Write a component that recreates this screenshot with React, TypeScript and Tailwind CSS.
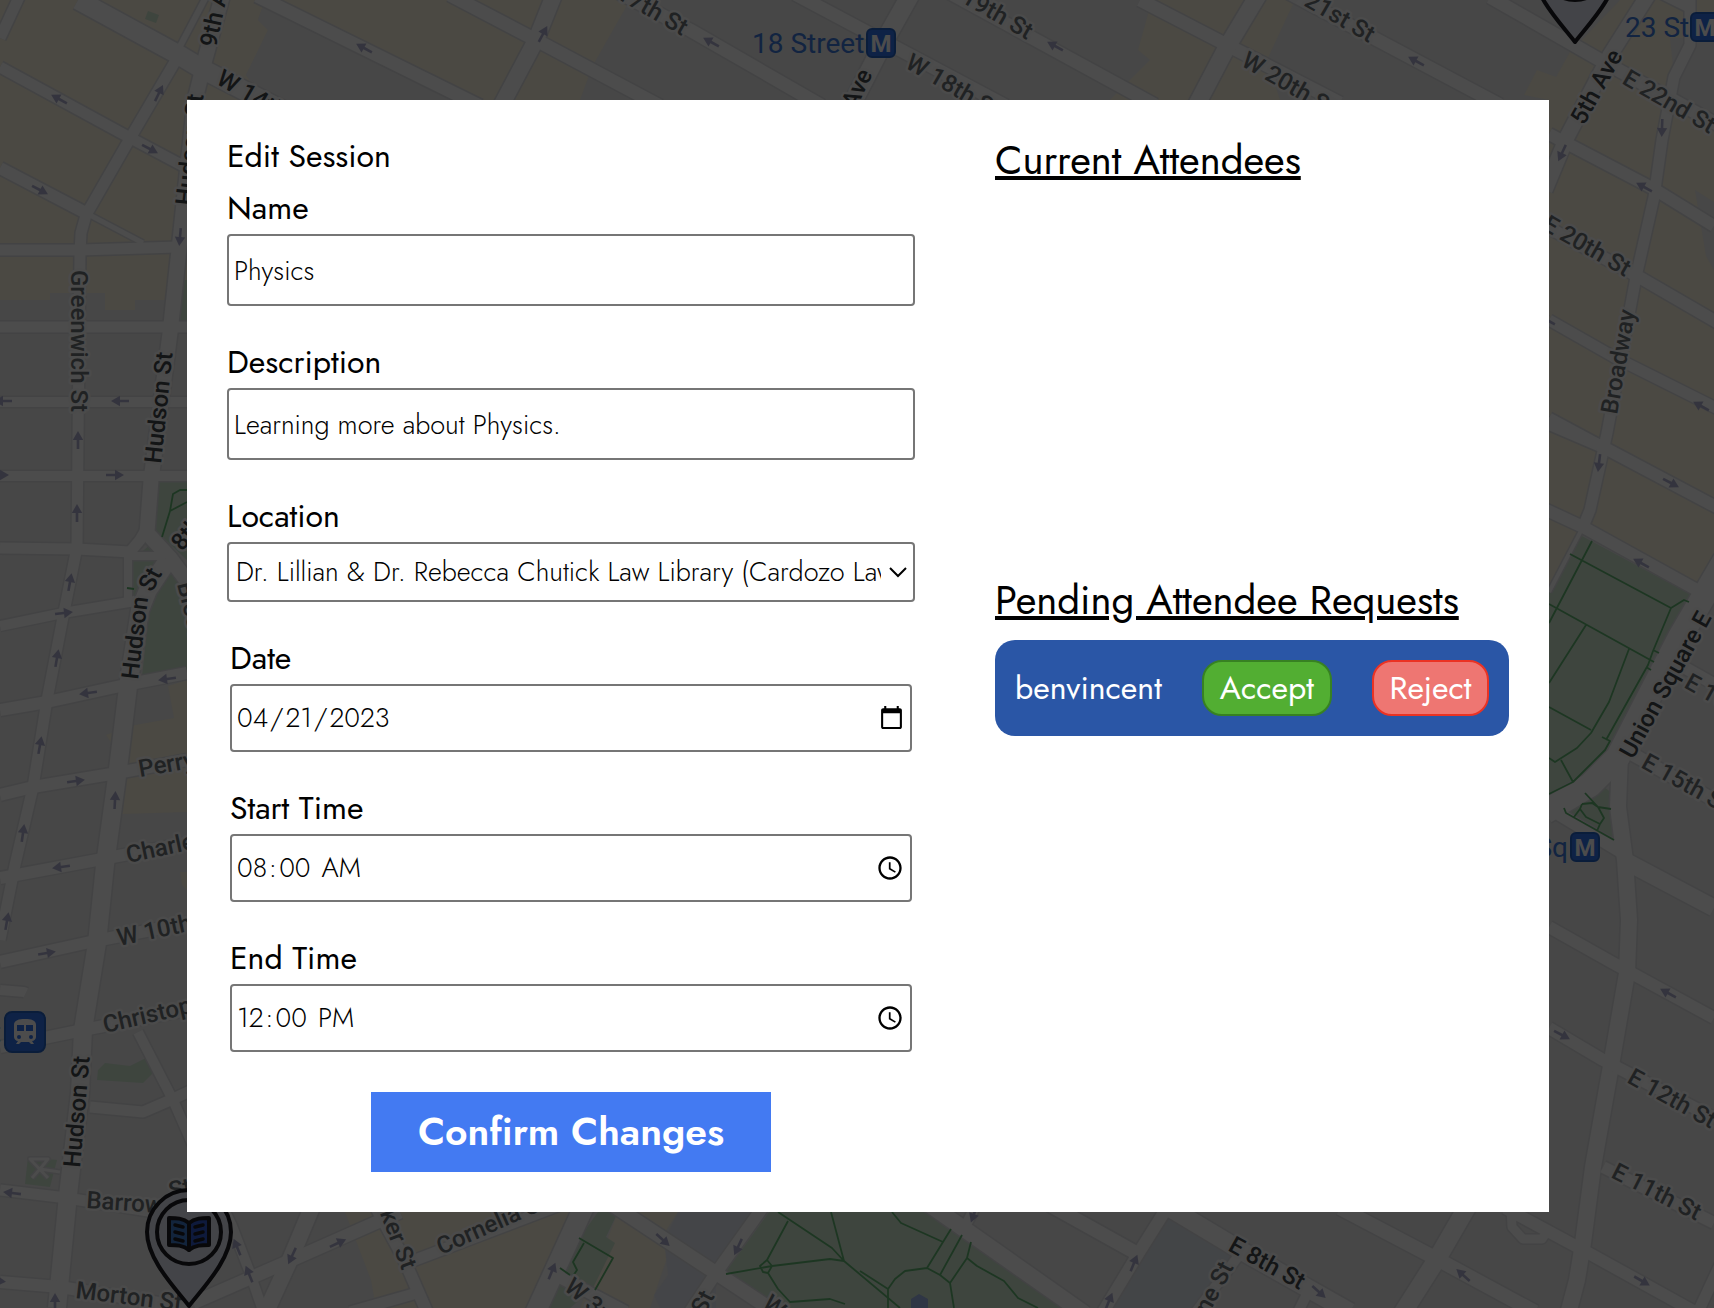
import type { ReactNode } from "react";

/* ------------------------------------------------------------------ map */

const blocks: { color: string; points: string }[] = [
  { color: "#faf3df", points: "0,0 265,0 258,20 268,30 246,75 262,100 187,100 187,300 135,300 135,310 105,310 105,293 50,293 50,300 0,300" },
  { color: "#faf3df", points: "264,0 630,0 592,67 580,100 470,100" },
  { color: "#ededed", points: "265,0 258,20 268,30 246,75 275,100 425,100 468,100 480,106 264,0" },
  { color: "#faf3df", points: "1152,0 1295,0 1267,60 1280,100 1110,100 1150,60 1138,50" },
  { color: "#faf3df", points: "1620,0 1714,0 1714,580 1697,590 1580,532 1549,590 1549,100 1524,95 1537,70 1556,77 1570,52" },
  { color: "#ededed", points: "1670,38 1714,38 1714,120 1676,95" },
  { color: "#ededed", points: "1695,190 1714,202 1714,270 1706,256" },
  { color: "#faf3df", points: "168,686 187,680 187,812 122,814 128,768 106,735 130,726 174,718" },
  { color: "#faf3df", points: "180,872 187,872 187,890 182,885" },
  { color: "#faf3df", points: "345,1212 575,1212 540,1308 376,1308 371,1280" },
  { color: "#faf3df", points: "618,1212 678,1212 660,1240 668,1255 650,1308 580,1308" },
  { color: "#e4e8f0", points: "678,1212 762,1212 716,1272 716,1308 660,1308 654,1295 668,1275 664,1240" },
  { color: "#e2e6ee", points: "1169,1214 1236,1255 1196,1308 1112,1308" },
];

const parks: string[] = [
  "148,11 159,15 156,23 145,19",
  "454,0 470,0 465,9",
  "182,280 187,280 187,322 180,320",
  "159,481 187,481 187,560 155,530",
  "132,560 150,545 176,575 187,585 187,670 142,677 148,620 130,600",
  "98,1070 105,1063 130,1066 146,1058 153,1073 143,1083 97,1080",
  "28,1157 57,1160 50,1187 25,1184",
  "598,1212 618,1212 606,1237 615,1243 592,1290 570,1308 542,1308 553,1275",
  "769,1212 931,1212 1072,1308 765,1308 724,1274",
  "1580,535 1692,595 1607,750 1573,782 1549,795 1549,592",
  "1597,782 1612,793 1614,840 1563,812",
];

const footpaths: string[] = [
  "187,490 180,490 173,494 170,511 187,502 M170,511 162,537",
  "127,588 134,589",
  "579,1238 613,1258 595,1290 M584,1243 573,1262 577,1270 573,1276 M560,1268 570,1275",
  "778,1212 832,1248 844,1261 900,1308 M831,1212 844,1261 830,1259 772,1266 726,1274 M788,1221 767,1260 M767,1260 760,1266 763,1272 768,1273 772,1266 767,1260 M768,1273 778,1289 790,1302 830,1299 845,1304",
  "892,1212 901,1223 943,1242 M951,1229 927,1268 940,1275 962,1235 M971,1242 967,1258 950,1283 940,1275 M967,1258 977,1266 1004,1281 1018,1298 1038,1308 M888,1308 888,1289 895,1279 905,1271 927,1268 M950,1283 954,1308 M860,1271 888,1289",
  "1592,541 1549,623 M1570,554 1671,608 1684,600 1689,602 M1671,608 1653,651 1648,665 1606,740 M1549,604 1654,662 M1586,625 1549,683 M1629,649 1609,702 1591,733 1577,748 1555,762 1549,758 M1549,707 1591,730 M1602,737 1610,741 1605,750 1573,782 1549,794 M1561,760 1573,782 M1653,650 1659,653 M1646,667 1651,670",
  "1585,793 1598,807 1611,809 M1582,804 1592,803 1598,807 1604,818 1600,824 1586,817 1580,809 1582,804 M1580,809 1574,817 M1600,824 1597,831 M1564,808 1566,813 1614,840",
];

const roads: { w: number; d: string }[] = [
  { w: 19, d: "78,0 179,55 204,70 290,114" },
  { w: 11, d: "0,67 123,134 187,168" },
  { w: 12, d: "0,168 86,213" },
  { w: 5, d: "86,213 143,243" },
  { w: 11, d: "20,-5 0,38" },
  { w: 11, d: "179,55 132,135 86,215 81,233 80,253 78,440 77,547 63,617 47,700 33,787 15,865 0,940" },
  { w: 6, d: "177,52 207,-5" },
  { w: 15, d: "224,-10 204,63 195,100 180,240 170,333 151,480 147,533 170,558 190,585" },
  { w: 11, d: "0,250 80,250 178,247" },
  { w: 11, d: "0,327 187,327" },
  { w: 10, d: "0,402 187,402" },
  { w: 10, d: "0,476 187,476" },
  { w: 11, d: "0,548 77,549 130,552 140,540 147,528" },
  { w: 8, d: "130,556 160,556" },
  { w: 8, d: "128,556 128,600" },
  { w: 10, d: "0,626 63,613 135,601" },
  { w: 12, d: "0,710 47,702 125,685 187,673" },
  { w: 12, d: "0,795 33,787 117,773 187,760" },
  { w: 12, d: "0,878 97,860 187,843" },
  { w: 12, d: "0,962 90,942 187,923" },
  { w: 12, d: "0,1047 83,1030 187,1010" },
  { w: 18, d: "168,560 148,590 140,610 128,687 117,777 105,865 97,943 83,1030 80,1093 68,1195 57,1308" },
  { w: 10, d: "0,990 24,992 26,993" },
  { w: 11, d: "90,1107 143,1112 173,1099 190,1091" },
  { w: 10, d: "138,1032 173,1100 195,1150 232,1226 250,1273 262,1308" },
  { w: 11, d: "0,1190 67,1198 167,1214" },
  { w: 12, d: "0,1282 60,1287 190,1308" },
  { w: 3, d: "60,1172 40,1169 48,1159 30,1159 48,1178 M40,1169 32,1178" },
  { w: 13, d: "193,1303 287,1262 400,1212" },
  { w: 16, d: "315,1200 289,1262 266,1312" },
  { w: 12, d: "372,1200 403,1257 427,1312" },
  { w: 11, d: "410,1262 560,1205" },
  { w: 11, d: "350,1312 417,1293" },
  { w: 20, d: "587,1200 532,1320" },
  { w: 12, d: "550,1272 626,1312" },
  { w: 14, d: "608,1202 716,1273 775,1312" },
  { w: 12, d: "768,1200 716,1273 690,1312" },
  { w: 16, d: "920,1198 1085,1314" },
  { w: 10, d: "976,1205 961,1235" },
  { w: 14, d: "1050,1205 1138,1254" },
  { w: 12, d: "1170,1203 1138,1254 1103,1312" },
  { w: 18, d: "1165,1205 1240,1250 1350,1312" },
  { w: 10, d: "1240,1254 1196,1312" },
  { w: 10, d: "1308,1292 1298,1312" },
  { w: 14, d: "1340,1208 1437,1259 1535,1312" },
  { w: 18, d: "1470,1202 1437,1259 1402,1314" },
  { w: 9, d: "1511,1208 1512,1227 1523,1239 1542,1239 1548,1230" },
  { w: 12, d: "1505,1208 1583,1250 1695,1312" },
  { w: 16, d: "1620,755 1618,807 1625,860 1629,920 1627,973 1612,1060 1593,1167 1583,1243 1577,1280 1568,1314" },
  { w: 17, d: "1627,862 1714,908" },
  { w: 12, d: "1549,927 1613,963 1714,1018" },
  { w: 12, d: "1549,1028 1603,1060 1714,1118" },
  { w: 12, d: "1603,1167 1714,1223" },
  { w: 11, d: "1720,1265 1698,1312" },
  { w: 12, d: "1540,420 1603,447 1720,509" },
  { w: 12, d: "1540,507 1583,527 1697,590" },
  { w: 4, d: "1583,527 1549,592" },
  { w: 24, d: "1725,560 1680,637 1618,757 1590,785 1545,812" },
  { w: 13, d: "1549,808 1625,854" },
  { w: 13, d: "1625,750 1714,800" },
  { w: 12, d: "1680,665 1714,684" },
  { w: 13, d: "1140,0 1227,45 1340,103" },
  { w: 17, d: "1260,-8 1227,47 1196,106" },
  { w: 13, d: "1287,-8 1500,105" },
  { w: 13, d: "1490,-3 1600,60 1720,126" },
  { w: 15, d: "1650,-8 1610,55 1567,137 1545,190" },
  { w: 12, d: "1549,134 1654,189 1714,226" },
  { w: 12, d: "1660,-8 1692,8" },
  { w: 11, d: "1690,-5 1690,45 1674,77 1662,140 1654,197 1636,277 1607,433 1590,510 1583,527" },
  { w: 12, d: "1549,228 1639,277 1720,324" },
  { w: 11, d: "1549,320 1614,357 1720,410" },
  { w: 11, d: "1549,418 1603,447" },
  { w: 13, d: "257,-4 480,106" },
  { w: 16, d: "556,-10 536,40 500,108" },
  { w: 13, d: "450,-5 536,40 660,106" },
  { w: 13, d: "610,-12 690,30 822,106" },
  { w: 13, d: "795,-6 874,36 1006,106" },
  { w: 18, d: "912,-8 885,40 850,108" },
  { w: 13, d: "950,-7 1155,105" },
];

const arrows: [number, number, number][] = [
  [59, 99, 209], [159, 93, -64], [150, 149, 28], [40, 190, 28], [180, 237, 95], [120, 401, 180], [3, 401, 180],
  [364, 48, 209], [543, 34, -62], [711, 42, 209], [1055, 46, 209], [1416, 61, 209], [1662, 128, 92], [1562, 153, 115],
  [1644, 187, 209], [1701, 406, 209], [1547, 320, 209], [78, 440, -90], [0, 475, 0], [115, 475, 0], [77, 513, -90],
  [70, 582, -80], [64, 613, -6], [57, 658, -80], [88, 693, 172], [167, 679, 172], [40, 745, -80], [76, 781, -8],
  [115, 800, -87], [23, 833, -82], [61, 867, 172], [1599, 463, 97], [1671, 483, 28], [1641, 563, 209], [7, 921, -80],
  [47, 953, -10], [12, 1193, 187], [-3, 1281, 5], [55, 1302, -90], [237, 1247, -112], [249, 1274, -112], [292, 1256, 115],
  [338, 1243, -25], [552, 1271, -68], [663, 1240, 42], [738, 1247, 115], [1134, 1263, -68], [1109, 1301, -68],
  [974, 1214, 110], [1319, 1292, 42], [1463, 1275, 222], [1642, 1281, 30], [1562, 1035, 28], [1668, 993, 209],
];

type Label = { t: string; x: number; y: number; r: number; dark?: boolean; end?: boolean };
const labels: Label[] = [
  { t: "Greenwich St", x: 71, y: 270, r: 90 },
  { t: "9th Ave", x: 216, y: 48, r: -78, dark: true },
  { t: "W 14th St", x: 215, y: 83, r: 30, dark: true },
  { t: "Hudson St", x: 192, y: 206, r: -84, dark: true },
  { t: "Hudson St", x: 161, y: 464, r: -84, dark: true },
  { t: "Hudson", x: 138, y: 680, r: -83, dark: true },
  { t: "St", x: 152, y: 593, r: -62, dark: true },
  { t: "8th Ave", x: 182, y: 552, r: -50, dark: true },
  { t: "Bleecker St", x: 177, y: 584, r: 76 },
  { t: "Perry St", x: 140, y: 777, r: -10 },
  { t: "Charles St", x: 128, y: 863, r: -12 },
  { t: "W 10th St", x: 119, y: 946, r: -12 },
  { t: "Christopher St", x: 105, y: 1033, r: -13 },
  { t: "Hudson St", x: 80, y: 1168, r: -85, dark: true },
  { t: "Barrow", x: 86, y: 1208, r: 4 },
  { t: "St", x: 171, y: 1199, r: -14 },
  { t: "Morton St", x: 75, y: 1298, r: 7 },
  { t: "Bleecker St", x: 402, y: 1271, r: 69, end: true },
  { t: "Cornelia St", x: 441, y: 1255, r: -24 },
  { t: "W 3rd St", x: 563, y: 1289, r: 40 },
  { t: "Thompson St", x: 715, y: 1296, r: -62, end: true },
  { t: "W 4th St", x: 761, y: 1306, r: 40 },
  { t: "W 17th St", x: 682, y: 36, r: 30, end: true },
  { t: "7th Ave", x: 873, y: 74, r: -64, dark: true, end: true },
  { t: "W 18th St", x: 904, y: 67, r: 30 },
  { t: "W 19th St", x: 1027, y: 40, r: 30, end: true },
  { t: "W 21st St", x: 1369, y: 43, r: 30, end: true },
  { t: "W 20th St", x: 1240, y: 65, r: 30 },
  { t: "5th Ave", x: 1584, y: 126, r: -61, dark: true },
  { t: "E 22nd St", x: 1621, y: 83, r: 30 },
  { t: "E 20th St", x: 1625, y: 277, r: 30, end: true },
  { t: "Broadway", x: 1617, y: 415, r: -80 },
  { t: "Union Square E", x: 1633, y: 760, r: -61, dark: true },
  { t: "E 15th St", x: 1640, y: 767, r: 29 },
  { t: "E 16th St", x: 1683, y: 687, r: 29 },
  { t: "E 12th St", x: 1626, y: 1082, r: 29 },
  { t: "E 11th St", x: 1610, y: 1177, r: 27 },
  { t: "E 8th St", x: 1227, y: 1250, r: 29, dark: true },
  { t: "Greene St", x: 1234, y: 1267, r: -62, end: true },
];

function MetroBadge({ x, y }: { x: number; y: number }) {
  return (
    <g transform={`translate(${x} ${y})`}>
      <rect x="1" y="1" width="28" height="28" rx="5" fill="#3072ea" stroke="#2461c4" strokeWidth="2" />
      <text x="15" y="24" textAnchor="middle" fontSize="24" fontWeight="700" fill="#fff">M</text>
    </g>
  );
}

function Pin({ x, y }: { x: number; y: number }) {
  return (
    <g transform={`translate(${x} ${y})`} stroke="#1c1c22" strokeLinejoin="round" strokeLinecap="round">
      <path d="M0 0C-12 -16 -42 -46 -42 -74A42 42 0 0 1 42 -74C42 -46 12 -16 0 0Z" fill="#e2e4f0" strokeWidth="4" />
      <circle cx="0" cy="-74" r="32" fill="#e2e4f0" strokeWidth="4" />
      <path d="M0 -83C-6 -88 -13 -88 -20 -88V-61C-13 -61 -6 -61 0 -56Z" fill="#3f78c8" strokeWidth="4" />
      <path d="M0 -83C6 -88 13 -88 20 -88V-61C13 -61 6 -61 0 -56Z" fill="#3058c8" strokeWidth="4" />
      <path d="M-14 -81L-6 -79M-14 -74L-6 -72M-14 -67L-6 -65M14 -81L6 -79M14 -74L6 -72M14 -67L6 -65" fill="none" strokeWidth="3.5" />
    </g>
  );
}

function CityMap() {
  return (
    <svg
      className="absolute inset-0 h-full w-full bg-[#ededed]"
      viewBox="0 0 1714 1308"
      preserveAspectRatio="xMidYMid slice"
      fontFamily="Roboto, sans-serif"
      aria-hidden="true"
    >
      {blocks.map((b) => <polygon key={b.points} points={b.points} fill={b.color} />)}
      {parks.map((p) => <polygon key={p} points={p} fill="#cfe6d1" />)}
      <g fill="none" strokeLinejoin="round">
        {roads.map((r) => <path key={r.d} d={`M${r.d}`} stroke="#dfe0e3" strokeWidth={r.w + 3} />)}
        {roads.map((r) => <path key={r.d} d={`M${r.d}`} stroke="#fdfdfd" strokeWidth={r.w} />)}
        {footpaths.map((p) => <path key={p} d={`M${p}`} stroke="#62b672" strokeWidth="1.8" />)}
      </g>
      <path d="M911 1308V1299L919 1294L928 1299V1308Z" fill="#9db4e6" />
      <g fill="#b0b0cf" stroke="none">
        {arrows.map(([x, y, r]) => (
          <path key={`${x},${y}`} transform={`translate(${x} ${y}) rotate(${r})`} d="M-9 -1.3H0V-5.2L9 0L0 5.2V1.3H-9Z" />
        ))}
      </g>
      <g fontSize="24" fontWeight="500" stroke="#fafafa" strokeWidth="5" strokeLinejoin="round">
        {labels.map((l) => (
          <text
            key={`${l.t}${l.x}`}
            transform={`translate(${l.x} ${l.y}) rotate(${l.r})`}
            textAnchor={l.end ? "end" : "start"}
            fill={l.dark ? "#42464a" : "#6d7276"}
            paintOrder="stroke"
          >
            {l.t}
          </text>
        ))}
      </g>
      <g fontSize="28" fill="#3c78da">
        <text x="752" y="53">18 Street</text>
        <text x="1625" y="37">23 St</text>
        <text x="1568" y="857" textAnchor="end">14 St-Union Sq</text>
        <text x="1" y="1042" textAnchor="end">St</text>
      </g>
      <MetroBadge x={866} y={28} />
      <MetroBadge x={1690} y={12} />
      <MetroBadge x={1570} y={832} />
      <g transform="translate(4 1011)">
        <rect x="1" y="1" width="40" height="40" rx="7" fill="#3072ea" stroke="#2461c4" strokeWidth="2" />
        <path fill="#fff" fillRule="evenodd" d="M10 14C10 9 15 8 21 8S32 9 32 14V26C32 28 30 30 28 30L30 33H27L25 31H17L15 33H12L14 30C12 30 10 28 10 26ZM13 14V20H20V14ZM22 14V20H29V14ZM15 24A2 2 0 1 0 15 28A2 2 0 1 0 15 24ZM27 24A2 2 0 1 0 27 28A2 2 0 1 0 27 24Z" />
      </g>
      <Pin x={189} y={1306} />
      <Pin x={1575} y={42} />
    </svg>
  );
}

/* ---------------------------------------------------------------- dialog */

const control =
  "block w-full rounded-[4px] border-2 border-[#767676] bg-white text-[27px] font-light text-black";

const temporal =
  "h-[68px] px-[3px] [&::-webkit-datetime-edit-month-field]:px-[2px] [&::-webkit-datetime-edit-day-field]:px-[2px] [&::-webkit-datetime-edit-year-field]:px-[2px] [&::-webkit-datetime-edit-hour-field]:px-[2px] [&::-webkit-datetime-edit-minute-field]:px-[2px] [&::-webkit-datetime-edit-ampm-field]:pl-[5px]";

function Field({ id, label, inset, children }: { id: string; label: string; inset?: boolean; children: ReactNode }) {
  return (
    <div className={inset ? "flex flex-col gap-1.5 px-[3px]" : "flex flex-col gap-1.5"}>
      <label htmlFor={id} className="text-[32px] leading-10">{label}</label>
      {children}
    </div>
  );
}

export default function App() {
  return (
    <div className="relative min-h-screen overflow-hidden font-[Jost,Lato,sans-serif] text-black">
      <CityMap />
      <div className="relative min-h-screen bg-black/70 pt-[100px] pr-[165px] pb-24 pl-[187px]">
        <div role="dialog" aria-labelledby="dialog-title" className="flex gap-20 bg-white p-10">
          <form className="flex min-w-0 flex-1 flex-col" onSubmit={(e) => e.preventDefault()}>
            <h1 id="dialog-title" className="mb-4 text-[32px] leading-8">Edit Session</h1>
            <div className="flex flex-col gap-9">
              <Field id="name" label="Name">
                <input id="name" type="text" defaultValue="Physics" className={`${control} h-[72px] px-[5px]`} />
              </Field>
              <Field id="description" label="Description">
                <input id="description" type="text" defaultValue="Learning more about Physics." className={`${control} h-[72px] px-[5px]`} />
              </Field>
              <Field id="location" label="Location">
                <div className="relative">
                  <select id="location" className={`${control} h-[60px] appearance-none pr-8 pl-[7px]`}>
                    <option>Dr. Lillian &amp; Dr. Rebecca Chutick Law Library (Cardozo Law School)</option>
                  </select>
                  <svg className="pointer-events-none absolute top-5 right-1.5 h-5 w-5" viewBox="0 0 20 20" fill="none" stroke="#000" strokeWidth="2" aria-hidden="true">
                    <path d="M1 6L9 14L17 6" />
                  </svg>
                </div>
              </Field>
              <Field id="date" label="Date" inset>
                <input id="date" type="date" defaultValue="2023-04-21" className={`${control} ${temporal}`} />
              </Field>
              <Field id="start" label="Start Time" inset>
                <input id="start" type="time" defaultValue="08:00" className={`${control} ${temporal}`} />
              </Field>
              <Field id="end" label="End Time" inset>
                <input id="end" type="time" defaultValue="12:00" className={`${control} ${temporal}`} />
              </Field>
            </div>
            <button type="submit" className="mt-10 h-20 w-[400px] self-center bg-[#437af2] text-[39px] font-semibold text-white">
              Confirm Changes
            </button>
          </form>

          <div className="w-[514px] shrink-0">
            <section className="min-h-[440px]">
              <h2 className="text-[40px] leading-10 underline">Current Attendees</h2>
            </section>
            <section className="flex flex-col gap-5">
              <h2 className="text-[40px] leading-10 whitespace-nowrap underline">Pending Attendee Requests</h2>
              <div className="flex items-center justify-between rounded-[20px] bg-[#2a56a6] p-5 text-[32px] text-white">
                <span>benvincent</span>
                <button type="button" className="h-14 w-[130px] rounded-[20px] border-2 border-[#378122] bg-[#52ae32]">Accept</button>
                <button type="button" className="h-14 w-[117px] rounded-[20px] border-2 border-[#eb3223] bg-[#ee7672]">Reject</button>
              </div>
            </section>
          </div>
        </div>
      </div>
    </div>
  );
}
